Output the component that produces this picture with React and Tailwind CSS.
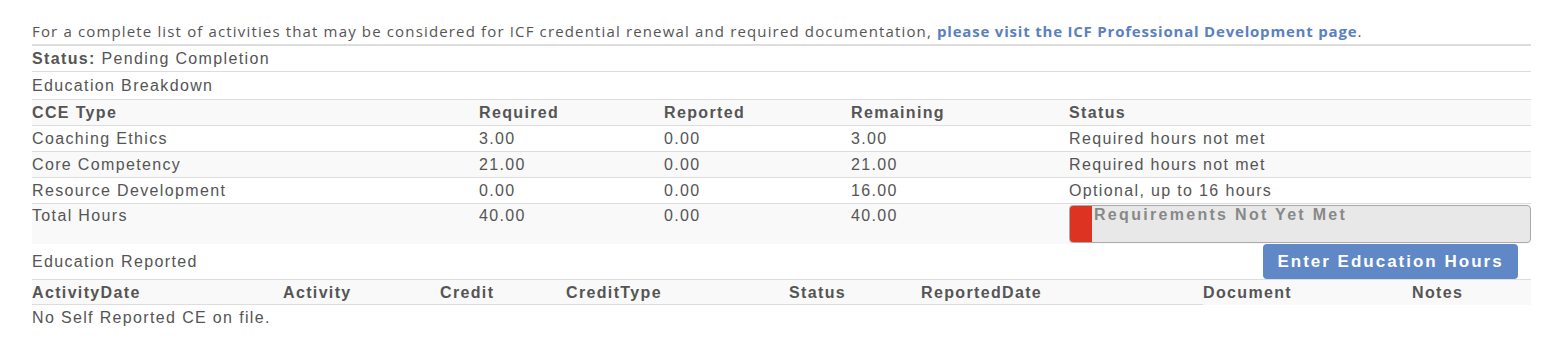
export default function App() {
  const rows = [
    ["Coaching Ethics", "3.00", "0.00", "3.00", "Required hours not met", "bg-white"],
    ["Core Competency", "21.00", "0.00", "21.00", "Required hours not met", "bg-[#f9f9f9]"],
    ["Resource Development", "0.00", "0.00", "16.00", "Optional, up to 16 hours", "bg-white"],
  ];
  return (
    <div className="bg-white w-[1563px] h-[352px] pl-[32px] pr-[32px] pt-[18px] text-[#555] font-['Liberation_Sans',Arial,sans-serif] text-[16px] tracking-[1.35px]">
      <p className="font-['Open_Sans',sans-serif] text-[15px] leading-[26px] text-[#555] border-b-2 border-[#ddd] tracking-[1.15px]">
        For a complete list of activities that may be considered for ICF credential renewal and required documentation,{" "}
        <a className="font-bold text-[#5b80c0] tracking-[0.8px]">please visit the ICF Professional Development page</a>.
      </p>
      <div className="h-[26px] leading-[25px] border-b border-[#ddd]">
        <span className="font-bold">Status:</span> Pending Completion
      </div>
      <div className="h-[28px] leading-[28px] border-b border-[#ddd]">Education Breakdown</div>
      <div className="grid grid-cols-[447px_185px_187px_218px_1fr]">
        {["CCE Type", "Required", "Reported", "Remaining", "Status"].map((h) => (
          <div key={h} className="bg-[#f9f9f9] font-bold h-[26px] leading-[25px] border-b border-[#ddd]">{h}</div>
        ))}
        {rows.map((r) =>
          r.slice(0, 5).map((c, i) => (
            <div key={r[0] + i} className={`${r[5]} h-[26px] leading-[25px] border-b border-[#ddd]`}>{c}</div>
          ))
        )}
        {["Total Hours", "40.00", "0.00", "40.00"].map((c, i) => (
          <div key={"t" + i} className="bg-[#f9f9f9] h-[40px] leading-[24px]">{c}</div>
        ))}
        <div className="bg-[#f9f9f9] h-[40px] pt-[1px]">
          <div className="h-[38px] rounded-[4px] border border-[#aaa] bg-[#e8e8e8] flex overflow-hidden">
            <div className="w-[22px] bg-[#dc3322] h-full"></div>
            <div className="pl-[2px] font-bold text-[#888] leading-[18px] tracking-[2.3px]">Requirements Not Yet Met</div>
          </div>
        </div>
      </div>
      <div className="flex items-start h-[35px]">
        <div className="flex-1 leading-[35px]">Education Reported</div>
        <button className="mr-[13px] w-[255px] h-[35px] bg-[#6088c6] text-white font-bold text-[17px] tracking-[2px] rounded-[4px]">
          Enter Education Hours
        </button>
      </div>
      <div className="grid grid-cols-[251px_157px_126px_223px_132px_282px_209px_1fr]">
        {["ActivityDate", "Activity", "Credit", "CreditType", "Status", "ReportedDate"].map((h) => (
          <div key={h} className="bg-[#f9f9f9] font-bold h-[26px] leading-[25px] border-t border-b border-[#ddd]">{h}</div>
        ))}
        {["Document", "Notes"].map((h) => (
          <div key={h} className="bg-[#f9f9f9] font-bold h-[26px] leading-[25px] border-t border-[#ddd]">{h}</div>
        ))}
      </div>
      <div className="leading-[26px]">No Self Reported CE on file.</div>
    </div>
  );
}
